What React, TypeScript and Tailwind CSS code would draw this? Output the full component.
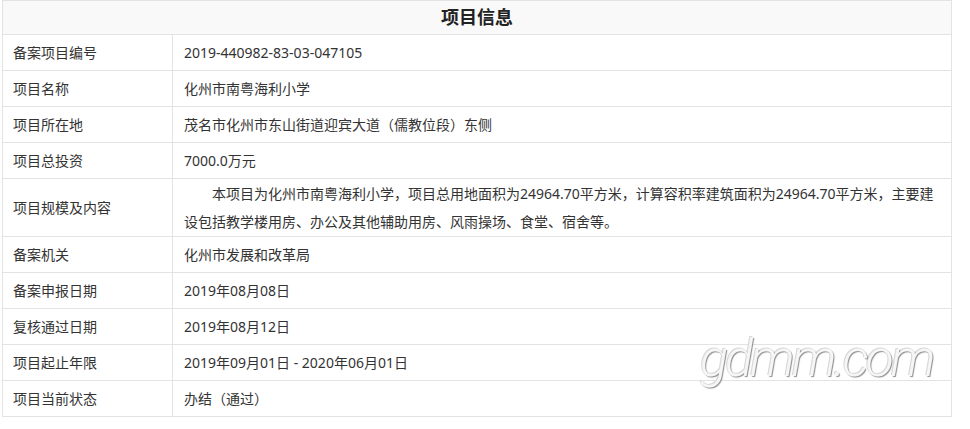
const rows: { label: string; value: string; tall?: boolean }[] = [
  { label: "备案项目编号", value: "2019-440982-83-03-047105" },
  { label: "项目名称", value: "化州市南粤海利小学" },
  { label: "项目所在地", value: "茂名市化州市东山街道迎宾大道（儒教位段）东侧" },
  { label: "项目总投资", value: "7000.0万元" },
  {
    label: "项目规模及内容",
    value:
      "本项目为化州市南粤海利小学，项目总用地面积为24964.70平方米，计算容积率建筑面积为24964.70平方米，主要建设包括教学楼用房、办公及其他辅助用房、风雨操场、食堂、宿舍等。",
    tall: true,
  },
  { label: "备案机关", value: "化州市发展和改革局" },
  { label: "备案申报日期", value: "2019年08月08日" },
  { label: "复核通过日期", value: "2019年08月12日" },
  { label: "项目起止年限", value: "2019年09月01日 - 2020年06月01日" },
  { label: "项目当前状态", value: "办结（通过）" },
];

export default function App() {
  return (
    <div className="relative h-[429px] w-[970px] bg-white pl-[2px] font-['Noto_Sans','Noto_Sans_CJK_SC',sans-serif] text-[14px] text-[#333]">
      <table className="w-[950px] border-collapse border border-[#e3e3e3]">
        <thead>
          <tr className="h-[34px] bg-[#f9f9f9]">
            <th colSpan={2} className="border-b border-[#e3e3e3] text-center text-[18px] font-bold text-[#222]">
              项目信息
            </th>
          </tr>
        </thead>
        <tbody>
          {rows.map((row) => (
            <tr key={row.label} className={row.tall ? "h-[58px]" : "h-[36px]"}>
              <td className="w-[170px] border-b border-r border-[#e3e3e3] pl-[10px] align-middle">{row.label}</td>
              <td
                className={`border-b border-[#e3e3e3] pl-[11px] pr-[10px] align-middle ${
                  row.tall ? "indent-[2em] leading-[28px]" : ""
                }`}
              >
                {row.value}
              </td>
            </tr>
          ))}
        </tbody>
      </table>
      <div className="pointer-events-none absolute left-[700px] top-[333px] font-['Roboto',sans-serif] text-[52px] font-light italic leading-none tracking-[-3px] text-[#f6f6f6] [text-shadow:1px_1px_1px_#8e8e8e,-1px_-1px_0_#d8d8d8]">
        gdmm.com
      </div>
    </div>
  );
}
